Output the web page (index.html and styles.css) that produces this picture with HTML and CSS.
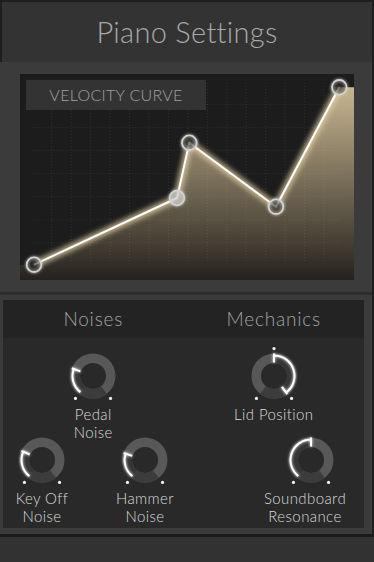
FILE: index.html
```html
<!DOCTYPE html>
<html lang="en">
<head>
    <meta charset="UTF-8">
    <meta name="viewport" content="width=device-width, initial-scale=1.0">
    <title>Piano Settings</title>
    <link rel="stylesheet" href="styles.css">
</head>
<body>
    <div class="app">
        <header class="top">
            <h1>Piano Settings</h1>
        </header>

        <section class="curve-panel">
            <div class="curve">
                <div class="curve-label">VELOCITY CURVE</div>
                <svg class="curve-svg" viewBox="0 0 334 206" width="334" height="206">
                    <defs>
                        <linearGradient id="curveFill" gradientUnits="userSpaceOnUse" x1="0" y1="13" x2="0" y2="206">
                            <stop offset="0" stop-color="#c8b690"/>
                            <stop offset="1" stop-color="#25221e"/>
                        </linearGradient>
                        <filter id="soft" x="-10%" y="-20%" width="120%" height="140%">
                            <feGaussianBlur stdDeviation="2.5"/>
                        </filter>
                        <filter id="glow" x="-60%" y="-60%" width="220%" height="220%">
                            <feGaussianBlur in="SourceGraphic" stdDeviation="1.4" result="b"/>
                            <feMerge>
                                <feMergeNode in="b"/>
                                <feMergeNode in="SourceGraphic"/>
                            </feMerge>
                        </filter>
                    </defs>
                    <path class="fill" d="M0 191L14 190.7L157 124L169.3 68.7L256 132.7L319.3 13.3L334 13.3V206H0Z"/>
                    <!-- dotted grid -->
                    <path class="grid" d="M31.7 9V189M51.2 9V189M70.6 9V189M90.1 9V189M109.5 9V189M129 9V189M148.4 9V189M167.9 9V189M187.3 9V189M206.8 9V189M226.2 9V189M245.7 9V189M265.1 9V189M284.6 9V189M304 9V189"/>
                    <path class="grid" d="M12.7 30.3H320.7M12.7 53.4H320.7M12.7 76.5H320.7M12.7 99.6H320.7M12.7 122.7H320.7M12.7 145.8H320.7M12.7 168.9H320.7"/>
                    <polyline class="halo" points="14,190.7 157,124 169.3,68.7 256,132.7 319.3,13.3"/>
                    <polyline class="line" points="14,190.7 157,124 169.3,68.7 256,132.7 319.3,13.3"/>
                    <g class="handles">
                        <circle cx="14" cy="190.7" r="7.3"/>
                        <circle class="active" cx="157" cy="124" r="7.3"/>
                        <circle cx="169.3" cy="68.7" r="7.3"/>
                        <circle cx="256" cy="132.7" r="7.3"/>
                        <circle cx="319.3" cy="13.3" r="7.3"/>
                    </g>
                </svg>
            </div>
        </section>

        <section class="params">
            <div class="params-inner">
                <div class="group">
                    <h2>Noises</h2>
                    <div class="row row-top">
                        <div class="knob">
                            <svg class="dial" viewBox="0 0 60 60" width="60" height="60">
                                <circle class="ring" cx="30" cy="30" r="17.75"/>
                                <path class="ring-gap" d="M40.93 43.99A17.75 17.75 0 0 1 19.07 43.99"/>
                                <path class="ring-val" d="M19.07 43.99A17.75 17.75 0 0 1 13.32 23.93"/>
                                <path class="arc" d="M17.38 46.15A20.5 20.5 0 0 1 10.74 22.99M17.31 25.38L8.86 22.3"/>
                                <circle class="dot" cx="12.45" cy="52.46" r="1.6"/>
                                <circle class="dot" cx="47.55" cy="52.46" r="1.6"/>
                            </svg>
                            <div class="knob-label">Pedal<br>Noise</div>
                        </div>
                    </div>
                    <div class="row row-bottom noises-bottom">
                        <div class="knob">
                            <svg class="dial" viewBox="0 0 60 60" width="60" height="60">
                                <circle class="ring" cx="30" cy="30" r="17.75"/>
                                <path class="ring-gap" d="M40.93 43.99A17.75 17.75 0 0 1 19.07 43.99"/>
                                <path class="ring-val" d="M19.07 43.99A17.75 17.75 0 0 1 13.79 22.78"/>
                                <path class="arc" d="M17.38 46.15A20.5 20.5 0 0 1 11.27 21.66M17.67 24.51L9.45 20.85"/>
                                <circle class="dot" cx="12.45" cy="52.46" r="1.6"/>
                                <circle class="dot" cx="47.55" cy="52.46" r="1.6"/>
                            </svg>
                            <div class="knob-label">Key Off<br>Noise</div>
                        </div>
                        <div class="knob">
                            <svg class="dial" viewBox="0 0 60 60" width="60" height="60">
                                <circle class="ring" cx="30" cy="30" r="17.75"/>
                                <path class="ring-gap" d="M40.93 43.99A17.75 17.75 0 0 1 19.07 43.99"/>
                                <path class="ring-val" d="M19.07 43.99A17.75 17.75 0 0 1 13.12 24.52"/>
                                <path class="arc" d="M17.38 46.15A20.5 20.5 0 0 1 10.5 23.67M17.16 25.83L8.6 23.05"/>
                                <circle class="dot" cx="12.45" cy="52.46" r="1.6"/>
                                <circle class="dot" cx="47.55" cy="52.46" r="1.6"/>
                            </svg>
                            <div class="knob-label">Hammer<br>Noise</div>
                        </div>
                    </div>
                </div>

                <div class="group">
                    <h2>Mechanics</h2>
                    <div class="row row-top">
                        <div class="knob">
                            <svg class="dial" viewBox="0 0 60 60" width="60" height="60">
                                <circle class="ring" cx="30" cy="30" r="17.75"/>
                                <path class="ring-gap" d="M40.93 43.99A17.75 17.75 0 0 1 19.07 43.99"/>
                                <path class="ring-val" d="M30 12.25A17.75 17.75 0 0 1 40.43 44.36"/>
                                <path class="arc" d="M30 9.5A20.5 20.5 0 0 1 42.05 46.58M30 16.5V7.5M37.94 40.92L43.23 48.2"/>
                                <circle class="dot" cx="30" cy="2.6" r="1.6"/>
                                <circle class="dot" cx="12.45" cy="52.46" r="1.6"/>
                                <circle class="dot" cx="47.55" cy="52.46" r="1.6"/>
                            </svg>
                            <div class="knob-label">Lid Position</div>
                        </div>
                    </div>
                    <div class="row row-bottom mechanics-bottom">
                        <div class="knob wide">
                            <svg class="dial shifted" viewBox="0 0 60 60" width="60" height="60">
                                <circle class="ring" cx="30" cy="30" r="17.75"/>
                                <path class="ring-gap" d="M40.93 43.99A17.75 17.75 0 0 1 19.07 43.99"/>
                                <path class="ring-val" d="M19.07 43.99A17.75 17.75 0 0 1 30 12.25"/>
                                <path class="arc" d="M17.38 46.15A20.5 20.5 0 0 1 30 9.5M30 16.5V7.5"/>
                                <circle class="dot" cx="12.45" cy="52.46" r="1.6"/>
                                <circle class="dot" cx="47.55" cy="52.46" r="1.6"/>
                            </svg>
                            <div class="knob-label">Soundboard<br>Resonance</div>
                        </div>
                    </div>
                </div>
            </div>
        </section>

        <footer class="bottom-bar"></footer>
    </div>
</body>
</html>
```

FILE: styles.css
```css
body { margin: 0; background: #1e1e1e; font-family: Lato, "Liberation Sans", sans-serif; }
.app { width: 374px; height: 562px; padding-top: 2px; box-sizing: border-box; display: flex; flex-direction: column; }

/* header */
.top { margin: 0 2px; height: 60px; background: #333; text-align: center; }
.top h1 { margin: 0; font-size: 29px; font-weight: 300; line-height: 60px; color: #a9a9a9; letter-spacing: 0.3px; }

/* velocity curve */
.curve-panel { margin-right: 2px; background: #3b3b3b; padding: 12px 18px 12px 20px; }
.curve { position: relative; width: 334px; height: 206px; background: #1c1c1c; }
.curve-svg { display: block; }
.curve-label { position: absolute; left: 6px; top: 6px; width: 180px; height: 30px; background: #333; color: #a0a0a0; font-size: 16px; font-weight: 300; line-height: 30px; text-align: center; letter-spacing: 0.3px; }
.fill { fill: url(#curveFill); }
.grid { stroke: rgba(255, 255, 255, 0.09); stroke-width: 1; stroke-dasharray: 1 2; fill: none; }
.halo { fill: none; stroke: #e8d4a6; stroke-width: 7; opacity: 0.75; filter: url(#soft); stroke-linejoin: round; }
.line { fill: none; stroke: #fff; stroke-width: 2; stroke-linejoin: round; }
.handles circle { fill: rgba(30, 30, 30, 0.35); stroke: #d2d2d2; stroke-width: 1.8; filter: url(#glow); }
.handles circle.active { fill: rgba(200, 200, 200, 0.45); }

/* parameters */
.params { margin-right: 2px; border-top: 3px solid #2d2d2d; background: #3b3b3b; padding: 5px 8px 6px 3px; }
.params-inner { display: flex; height: 228px; background: #292929; }
.group { flex: 1; }
.group h2 { margin: 0 0 8px; height: 38px; background: #232323; font-size: 19px; font-weight: 300; line-height: 38px; color: #a4a4a4; text-align: center; letter-spacing: 0.8px; }

.row { display: flex; justify-content: center; }
.row-top { height: 95px; }
.row-bottom { margin-top: -11px; }
.noises-bottom { justify-content: flex-start; padding-left: 1px; gap: 27px; }
.mechanics-bottom { justify-content: flex-end; padding-right: 9px; }

.knob { width: 76px; display: flex; flex-direction: column; align-items: center; }
.knob.wide { width: 100px; }
.dial { display: block; overflow: visible; }
.dial.shifted { margin-left: 12px; }
.knob-label { font-size: 15px; font-weight: 300; line-height: 17.5px; color: #dadada; text-align: center; letter-spacing: 0.4px; white-space: nowrap; }

.ring { fill: none; stroke: #585858; stroke-width: 9.5; }
.ring-gap { fill: none; stroke: #3c3c3c; stroke-width: 9.5; }
.ring-val { fill: none; stroke: #363636; stroke-width: 9.5; }
.arc { fill: none; stroke: #fff; stroke-width: 2; filter: url(#glow); }
.dot { fill: #f0f0f0; }

.bottom-bar { flex: 1; border-top: 3px solid #1a1a1a; background: #323232; }
```
